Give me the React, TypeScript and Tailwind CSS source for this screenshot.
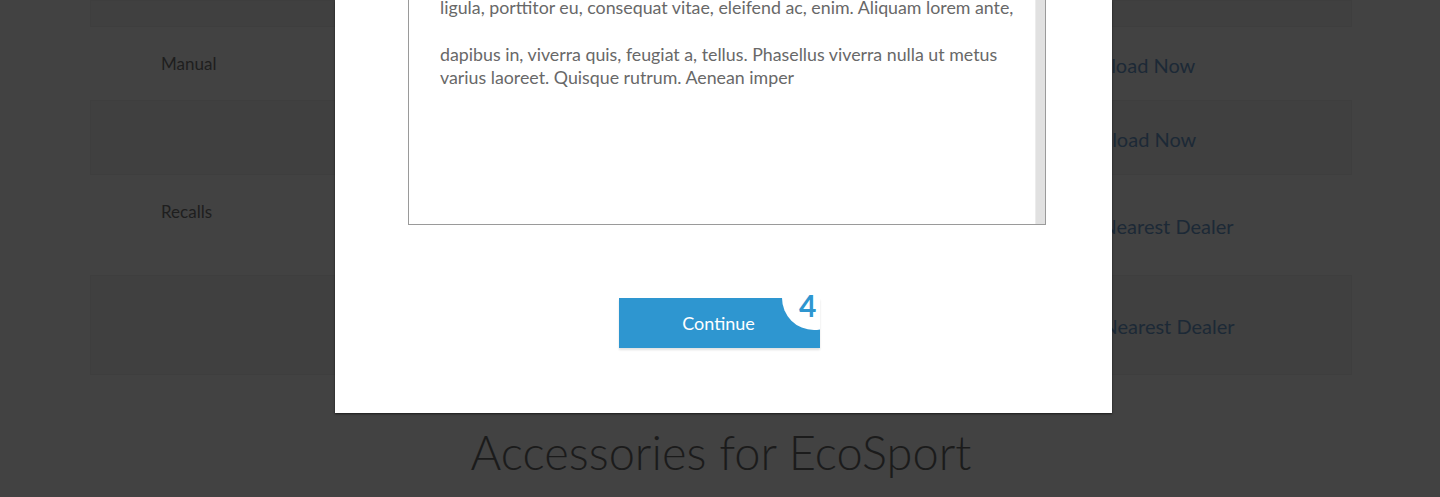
const rows = [
  { kind: "box", h: "h-[27px]" },
  { kind: "row", h: "h-[73px]", label: "Manual", link: "Download Now" },
  { kind: "box", h: "h-[75px]", link: "Download Now" },
  { kind: "row", h: "h-[100px]", label: "Recalls", link: "Find Nearest Dealer", top: true },
  { kind: "box", h: "h-[100px]", link: "Find Nearest Dealer" },
];

const App = () => {
  return (
    <div className="relative h-[497px] w-[1440px] overflow-hidden bg-[#424242] font-['Lato',sans-serif]">
      {/* page behind the dialog */}
      <div className="ml-[90px] w-[1262px]">
        {rows.map((r, i) => (
          <div
            key={i}
            className={`flex ${r.h} ${r.kind === "box" ? "border border-[#3e3e3e] bg-[#404040]" : ""}`}
          >
            <div className={`w-[968px] pl-[71px] text-[17px] text-[#1e1e1e] ${r.top ? "pt-[24px]" : "flex items-center"}`}>
              {r.label}
            </div>
            <div className="flex items-center pt-[2px] text-[20px] text-[#1c2936]">{r.link}</div>
          </div>
        ))}
        <h2 className="mt-[48px] text-center text-[47px] font-light leading-[58px] text-[#1b1b1b]">
          Accessories for EcoSport
        </h2>
      </div>

      {/* dialog */}
      <div className="absolute left-[335px] top-0 flex h-[413px] w-[777px] flex-col items-center bg-white shadow-[0_1px_2px_rgba(0,0,0,0.6)]">
        <div className="relative ml-[7px] h-[225px] w-[638px] overflow-hidden border-x border-b border-[#9a9a9a]">
          <div className="-mt-[5px] pl-[31px] pr-[14px] text-[17.8px] leading-[24px] text-[#686868]">
            <p className="whitespace-nowrap">ligula, porttitor eu, consequat vitae, eleifend ac, enim. Aliquam lorem ante,</p>
            <p className="mt-[23px]">dapibus in, viverra quis, feugiat a, tellus. Phasellus viverra nulla ut metus</p>
            <p className="-mt-[1px]">varius laoreet. Quisque rutrum. Aenean imper</p>
          </div>
          <div className="absolute right-0 top-0 h-full w-[10px] border-l border-[#ececec] bg-[#e1e1e1]" />
        </div>

        <div className="relative mt-[73px] ml-[-8px] h-[50px] w-[201px] overflow-hidden bg-[#2e96d0] shadow-[0_2px_2px_rgba(0,0,0,0.12)]">
          <div className="flex h-full items-center justify-center pr-[2px] text-[18px] text-white">Continue</div>
          <div className="absolute left-[163px] top-[-32px] h-[64px] w-[64px] rounded-full bg-white" />
        </div>
        <div className="relative -mt-[50px] ml-[-8px] h-0 w-[201px]">
          <span className="absolute left-[180px] top-[-11px] text-[30px] font-bold leading-[36px] text-[#2e96d0]">4</span>
        </div>
      </div>
    </div>
  );
};

export default App;
